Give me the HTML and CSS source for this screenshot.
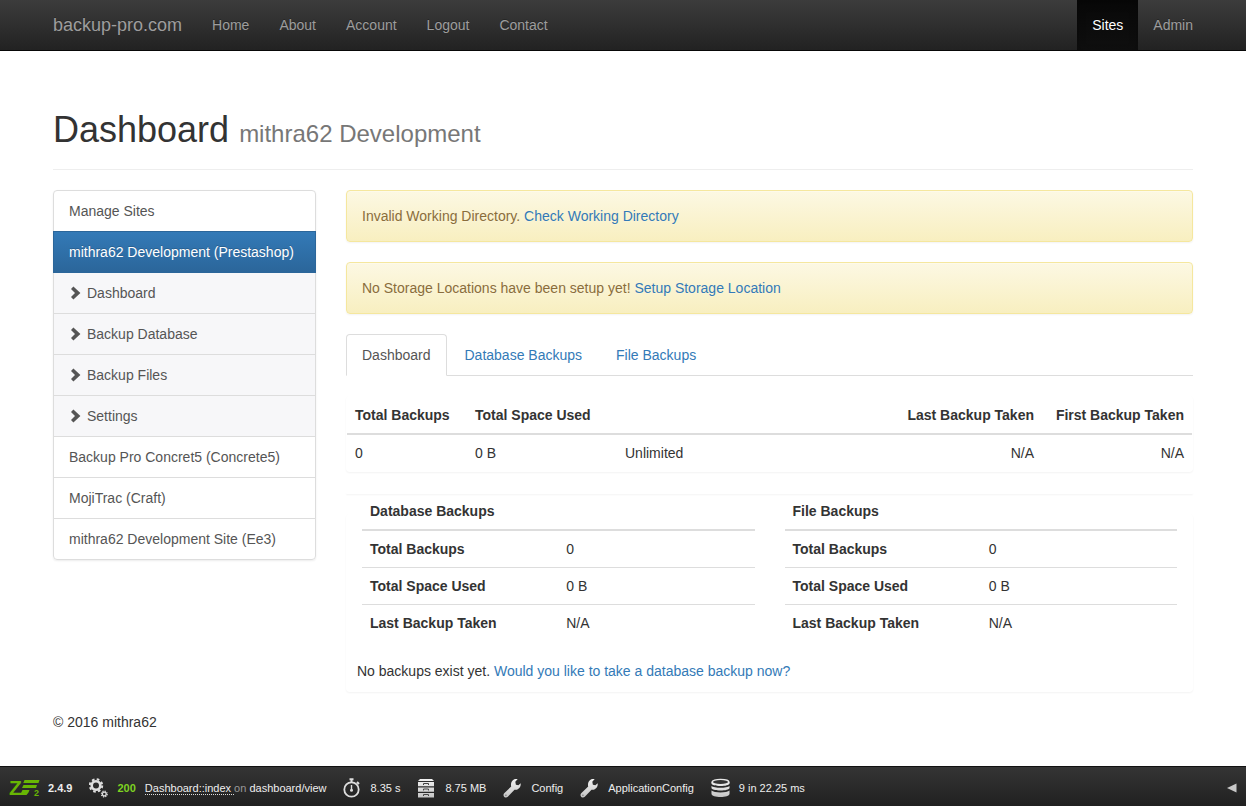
FILE: index.html
```html
<!DOCTYPE html>
<html lang="en">
<head>
<meta charset="utf-8">
<title>Dashboard - mithra62 Development</title>
<link rel="stylesheet" href="styles.css">
</head>
<body>
<svg class="defs" aria-hidden="true">
  <defs>
    <linearGradient id="metal" x1="0" y1="0" x2="0" y2="1"><stop offset="0" stop-color="#f2f2f2"/><stop offset="1" stop-color="#c4c4c4"/></linearGradient>
    <symbol id="chevron" viewBox="0 0 14 14"><path d="M2 3 4.400 .6 11.400 7 4.400 13.400 2 11 6 7z" fill="#555"/></symbol>
    <symbol id="wrench" viewBox="0 0 19 20"><path d="M1.200 15.200 8.200 8.600C7.400 5.700 8.600 2.400 11.300 1.300 12.500.8 13.700.8 14.700 1.100L12.300 3.800 12.900 6.700 15.400 7.200 17.700 5.300C18 8 16.800 10.300 14.800 11.300 13.700 11.900 12.500 11.900 11.500 11.700L4.800 18.800C3.600 20.100 1.300 19.600.7 18 .3 16.900.5 15.900 1.200 15.200z" fill="url(#metal)"/><circle cx="2.900" cy="17.200" r=".8" fill="#777"/></symbol>
  </defs>
</svg>
<nav class="navbar">
  <div class="container navbar-row">
    <a class="brand" href="#">backup-pro.com</a>
    <a class="nav-link" href="#">Home</a>
    <a class="nav-link" href="#">About</a>
    <a class="nav-link" href="#">Account</a>
    <a class="nav-link" href="#">Logout</a>
    <a class="nav-link" href="#">Contact</a>
    <div class="nav-right">
      <a class="nav-link active" href="#">Sites</a>
      <a class="nav-link" href="#">Admin</a>
    </div>
  </div>
</nav>

<div class="container page">
  <header class="page-header"><h1>Dashboard <small>mithra62 Development</small></h1></header>
  <div class="columns">
    <aside>
      <nav class="list-group">
        <a href="#">Manage Sites</a>
        <a class="active" href="#">mithra62 Development (Prestashop)</a>
        <a class="sub" href="#"><svg><use href="#chevron"/></svg>Dashboard</a>
        <a class="sub" href="#"><svg><use href="#chevron"/></svg>Backup Database</a>
        <a class="sub" href="#"><svg><use href="#chevron"/></svg>Backup Files</a>
        <a class="sub" href="#"><svg><use href="#chevron"/></svg>Settings</a>
        <a href="#">Backup Pro Concret5 (Concrete5)</a>
        <a href="#">MojiTrac (Craft)</a>
        <a href="#">mithra62 Development Site (Ee3)</a>
      </nav>
    </aside>
    <main>
      <div class="alert">Invalid Working Directory. <a href="#">Check Working Directory</a></div>
      <div class="alert">No Storage Locations have been setup yet! <a href="#">Setup Storage Location</a></div>
      <nav class="tabs">
        <a class="active" href="#">Dashboard</a>
        <a href="#">Database Backups</a>
        <a href="#">File Backups</a>
      </nav>
      <section class="panel">
        <table class="table totals">
          <thead><tr><th class="col-count">Total Backups</th><th class="col-date">Total Space Used</th><th></th><th class="right">Last Backup Taken</th><th class="right col-date">First Backup Taken</th></tr></thead>
          <tbody><tr><td>0</td><td>0 B</td><td>Unlimited</td><td class="right">N/A</td><td class="right">N/A</td></tr></tbody>
        </table>
      </section>
      <div class="panel"></div>
      <section class="panel details">
        <div class="split">
          <table class="table">
            <thead><tr><th colspan="2">Database Backups</th></tr></thead>
            <tbody>
              <tr><th>Total Backups</th><td>0</td></tr>
              <tr><th>Total Space Used</th><td>0 B</td></tr>
              <tr><th>Last Backup Taken</th><td>N/A</td></tr>
            </tbody>
          </table>
          <table class="table">
            <thead><tr><th colspan="2">File Backups</th></tr></thead>
            <tbody>
              <tr><th>Total Backups</th><td>0</td></tr>
              <tr><th>Total Space Used</th><td>0 B</td></tr>
              <tr><th>Last Backup Taken</th><td>N/A</td></tr>
            </tbody>
          </table>
        </div>
        <p>No backups exist yet. <a href="#">Would you like to take a database backup now?</a></p>
      </section>
    </main>
  </div>
  <footer>© 2016 mithra62</footer>
</div>

<div class="toolbar">
  <div class="tool">
    <svg class="logo" width="31" height="24" viewBox="0 0 31 24" role="img" aria-label="ZF2">
      <g fill="#68b604"><text class="logo-z" x="0" y="19">Z</text>
      <path d="M15.500 4H30.500L29.500 7H14.300zM14.500 9H28L27 12H13zM13.500 14H20.500L19.500 16.500 17.500 19H11z"/>
      <text class="logo-2" x="25" y="20">2</text></g>
    </svg>
    <b>2.4.9</b>
  </div>
  <div class="tool">
    <svg width="19" height="20" viewBox="0 0 19 20">
      <g fill="none" stroke="#dedede">
        <circle cx="7" cy="7.500" r="4.300" stroke-width="2.600"/>
        <circle cx="7" cy="7.500" r="6.200" stroke-width="2" stroke-dasharray="2.600 2.270"/>
        <circle cx="15.300" cy="16" r="1.900" stroke-width="1.300"/>
        <circle cx="15.300" cy="16" r="2.900" stroke-width="1.200" stroke-dasharray="1.200 1.078"/>
      </g>
    </svg>
    <span><b class="status">200</b></span>
    <span><a class="dotted" href="#">Dashboard::index </a><span class="muted">on</span> dashboard/view</span>
  </div>
  <div class="tool">
    <svg width="18" height="20" viewBox="0 0 18 20">
      <g fill="none" stroke="#dedede"><circle cx="8.500" cy="11.500" r="7.200" stroke-width="1.800"/><path d="M6.500 1.200H10.500M8.500 1V4M14 4 16 6" stroke-width="2"/><path d="M8.500 7V12.500" stroke-width="1.400"/></g>
      <circle cx="8.500" cy="12.300" r="1.500" fill="#dedede"/>
    </svg>
    <span>8.35 s</span>
  </div>
  <div class="tool">
    <svg width="19" height="20" viewBox="0 0 19 20">
      <path d="M3 1H15L17 3H1zM1 4H17V8.300H1zM1 9.500H17V13.700H1zM1 14.900H17V19.500H1z" fill="url(#metal)"/>
      <path d="M6.500 7V5.500H11.500V7M6.500 12.500V11H11.500V12.500M6.500 18V16.500H11.500V18" fill="none" stroke="#444"/>
    </svg>
    <span>8.75 MB</span>
  </div>
  <div class="tool"><svg width="19" height="20"><use href="#wrench"/></svg><span>Config</span></div>
  <div class="tool"><svg width="19" height="20"><use href="#wrench"/></svg><span>ApplicationConfig</span></div>
  <div class="tool">
    <svg width="19" height="20" viewBox="0 0 20 20">
      <path d="M.5 3.500V5.200C.5 8.700 19.500 8.700 19.500 5.200V3.500zM.5 7.800V10C.5 13.500 19.500 13.500 19.500 10V7.800C17 10.300 3 10.300.5 7.800zM.5 12.600V16C.5 20.500 19.500 20.500 19.500 16V12.600C17 15.300 3 15.300.5 12.600z" fill="url(#metal)"/>
      <ellipse cx="10" cy="3.700" rx="8.800" ry="2.800" fill="#333" stroke="#e8e8e8" stroke-width="1.400"/>
    </svg>
    <span>9 in 22.25 ms</span>
  </div>
  <button class="collapse" type="button" aria-label="Collapse toolbar"><svg width="10" height="10" viewBox="0 0 10 10"><path d="M0 5 9.500 .5V9.500z" fill="#c8c8c8"/></svg></button>
</div>
</body>
</html>
```
FILE: styles.css
```css
* { box-sizing: border-box; }
body {
  margin: 0;
  min-height: 100vh;
  display: flex;
  flex-direction: column;
  font: 14px/20px "Liberation Sans", Arial, sans-serif;
  color: #333;
  background: #fff;
}
a { color: #337ab7; text-decoration: none; }
.defs { position: absolute; width: 0; height: 0; }
.container { width: 100%; max-width: 1170px; margin: 0 auto; padding: 0 15px; }

.navbar { background: linear-gradient(#3c3c3c, #222); border-bottom: 1px solid #080808; }
.navbar-row { display: flex; }
.brand, .nav-link { padding: 15px; color: #9d9d9d; text-shadow: 0 -1px 0 rgba(0, 0, 0, .25); }
.brand { font-size: 18px; padding-left: 0; }
.nav-right { display: flex; margin-left: auto; margin-right: -15px; }
.nav-link.active { color: #fff; background: linear-gradient(#080808, #0f0f0f); box-shadow: inset 0 3px 9px rgba(0, 0, 0, .25); }

.page { padding-top: 59px; }
.page-header { padding-bottom: 19px; margin-bottom: 20px; border-bottom: 1px solid #eee; }
h1 { margin: 0; font-size: 36px; line-height: 40px; font-weight: 400; }
h1 small { font-size: 24px; line-height: 24px; color: #777; }
.columns { display: grid; grid-template-columns: minmax(0, 263fr) minmax(0, 847fr); gap: 30px; align-items: start; }

.list-group { border-radius: 4px; box-shadow: 0 1px 2px rgba(0, 0, 0, .075); }
.list-group a { display: block; padding: 10px 15px; border: 1px solid #ddd; color: #555; background: #fff; }
.list-group a + a { margin-top: -1px; }
.list-group a:first-child { border-radius: 4px 4px 0 0; }
.list-group a:last-child { border-radius: 0 0 4px 4px; }
.list-group a.sub { background: #f7f7f9; }
.list-group a.active { position: relative; color: #fff; background: linear-gradient(#337ab7, #2b669a); border-color: #2b669a; text-shadow: 0 -1px 0 #286090; }
.list-group svg { width: 14px; height: 14px; margin-right: 4px; vertical-align: -2px; }

.alert { padding: 15px; margin-bottom: 20px; color: #8a6d3b; background: linear-gradient(#fcf8e3, #f8efc0); border: 1px solid #f5e79e; border-radius: 4px; box-shadow: inset 0 1px 0 rgba(255, 255, 255, .25), 0 1px 2px rgba(0, 0, 0, .05); text-shadow: 0 1px 0 rgba(255, 255, 255, .2); }
.tabs { display: flex; gap: 2px; margin-bottom: 20px; border-bottom: 1px solid #ddd; }
.tabs a { padding: 10px 15px; margin-bottom: -1px; border: 1px solid transparent; border-radius: 4px 4px 0 0; }
.tabs a.active { color: #555; background: #fff; border-color: #ddd; border-bottom-color: #fff; }

.panel { border: 1px solid transparent; border-radius: 4px; margin-bottom: 20px; box-shadow: 0 1px 2px rgba(0, 0, 0, .05); }
.table { width: 100%; border-collapse: collapse; table-layout: fixed; }
.table th, .table td { padding: 8px; text-align: left; vertical-align: top; border-top: 1px solid #ddd; }
.table thead th { border-top: 0; border-bottom: 2px solid #ddd; }
.table .right { text-align: right; }
.col-count { width: 120px; }
.col-date { width: 150px; }
.split { display: grid; grid-template-columns: 1fr 1fr; gap: 30px; margin: -22px 15px 20px; }
.details p { margin: 0; padding: 0 10px 10px; }

.toolbar { display: flex; align-items: center; gap: 17px; height: 40px; margin-top: auto; padding: 3px 9px 0; background: linear-gradient(#343434, #212121); border-top: 1px solid #111; color: #eee; font-size: 11px; line-height: 16px; }
.tool { display: flex; align-items: center; gap: 9px; white-space: nowrap; }
.tool svg { flex: none; }
.tool:first-child { gap: 8px; }
.status { color: #7ed321; }
.dotted { color: #eee; border-bottom: 1px dotted #ddd; white-space: pre; }
.muted { color: #999; }
.logo { font-weight: 700; }
.logo-z { font-size: 21px; }
.logo-2 { font-size: 9px; }
.collapse { display: flex; margin-left: auto; padding: 0; border: 0; background: none; }
```
